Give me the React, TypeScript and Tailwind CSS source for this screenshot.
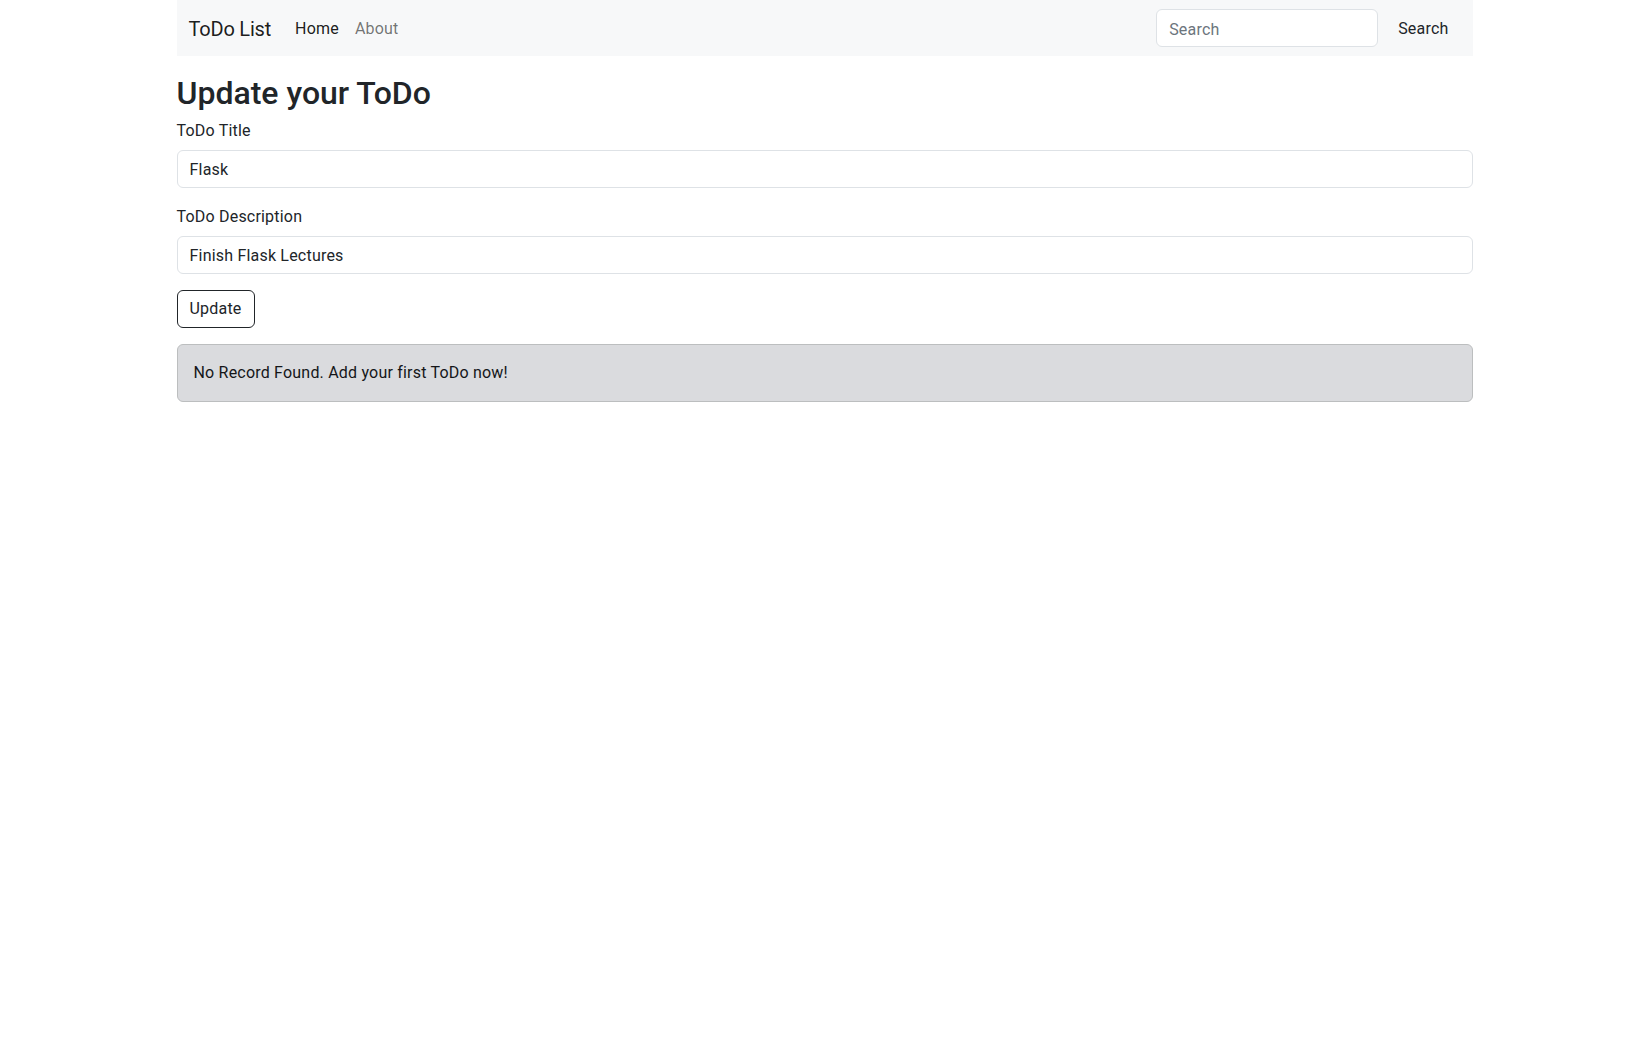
import React from "react";

export default function App() {
  return (
    <div className="min-h-screen bg-white">
      <div className="mx-auto w-[1320px] px-3 font-['Roboto','Liberation_Sans',sans-serif] tracking-[0.2px] text-[#212529]">
        <nav className="flex h-14 items-center bg-[#f7f8f9] px-3">
          <a className="mr-4 pt-[7px] pb-[5px] text-[20px] leading-[30px] tracking-[-0.2px] text-black/90">ToDo List</a>
          <a className="px-2 pt-[10px] pb-2 text-base leading-6 text-black/90">Home</a>
          <a className="px-2 pt-[10px] pb-2 text-base leading-6 text-black/55">About</a>
          <form className="ml-auto flex items-center">
            <input
              className="mr-2 h-[38px] w-[222px] rounded-md border border-[#dee2e6] bg-white px-3 pt-[2px] text-base tracking-[0.2px] text-[#212529] placeholder:text-[#6c757d] outline-none"
              placeholder="Search"
            />
            <button type="button" className="h-[38px] rounded-md px-3 pt-[2px] text-base tracking-[0.2px] text-[#212529]">
              Search
            </button>
          </form>
        </nav>

        <div className="mt-4">
          <h2 className="mb-2 h-[38px] pt-[2px] text-[32px] font-medium leading-[1.2] tracking-normal">Update your ToDo</h2>
          <div className="mb-4">
            <label className="mb-2 block h-6 pt-[1px] text-base leading-6">ToDo Title</label>
            <input
              readOnly
              value="Flask"
              className="block h-[38px] w-full rounded-md border border-[#dee2e6] bg-white px-3 text-base tracking-[0.2px] text-[#212529] outline-none"
            />
          </div>
          <div className="mb-4">
            <label className="mb-2 block h-6 pt-[1px] text-base leading-6">ToDo Description</label>
            <input
              readOnly
              value="Finish Flask Lectures"
              className="block h-[38px] w-full rounded-md border border-[#dee2e6] bg-white px-3 text-base tracking-[0.2px] text-[#212529] outline-none"
            />
          </div>
          <button
            type="button"
            className="mb-4 h-[38px] rounded-md border border-[#212529] px-3 text-base leading-6 tracking-[0.2px] text-[#212529]"
          >
            Update
          </button>
          <div className="rounded-md border border-[#bcbebf] bg-[#dadbde] px-4 py-4 text-base leading-6 text-[#141619]">
            No Record Found. Add your first ToDo now!
          </div>
        </div>
      </div>
    </div>
  );
}
